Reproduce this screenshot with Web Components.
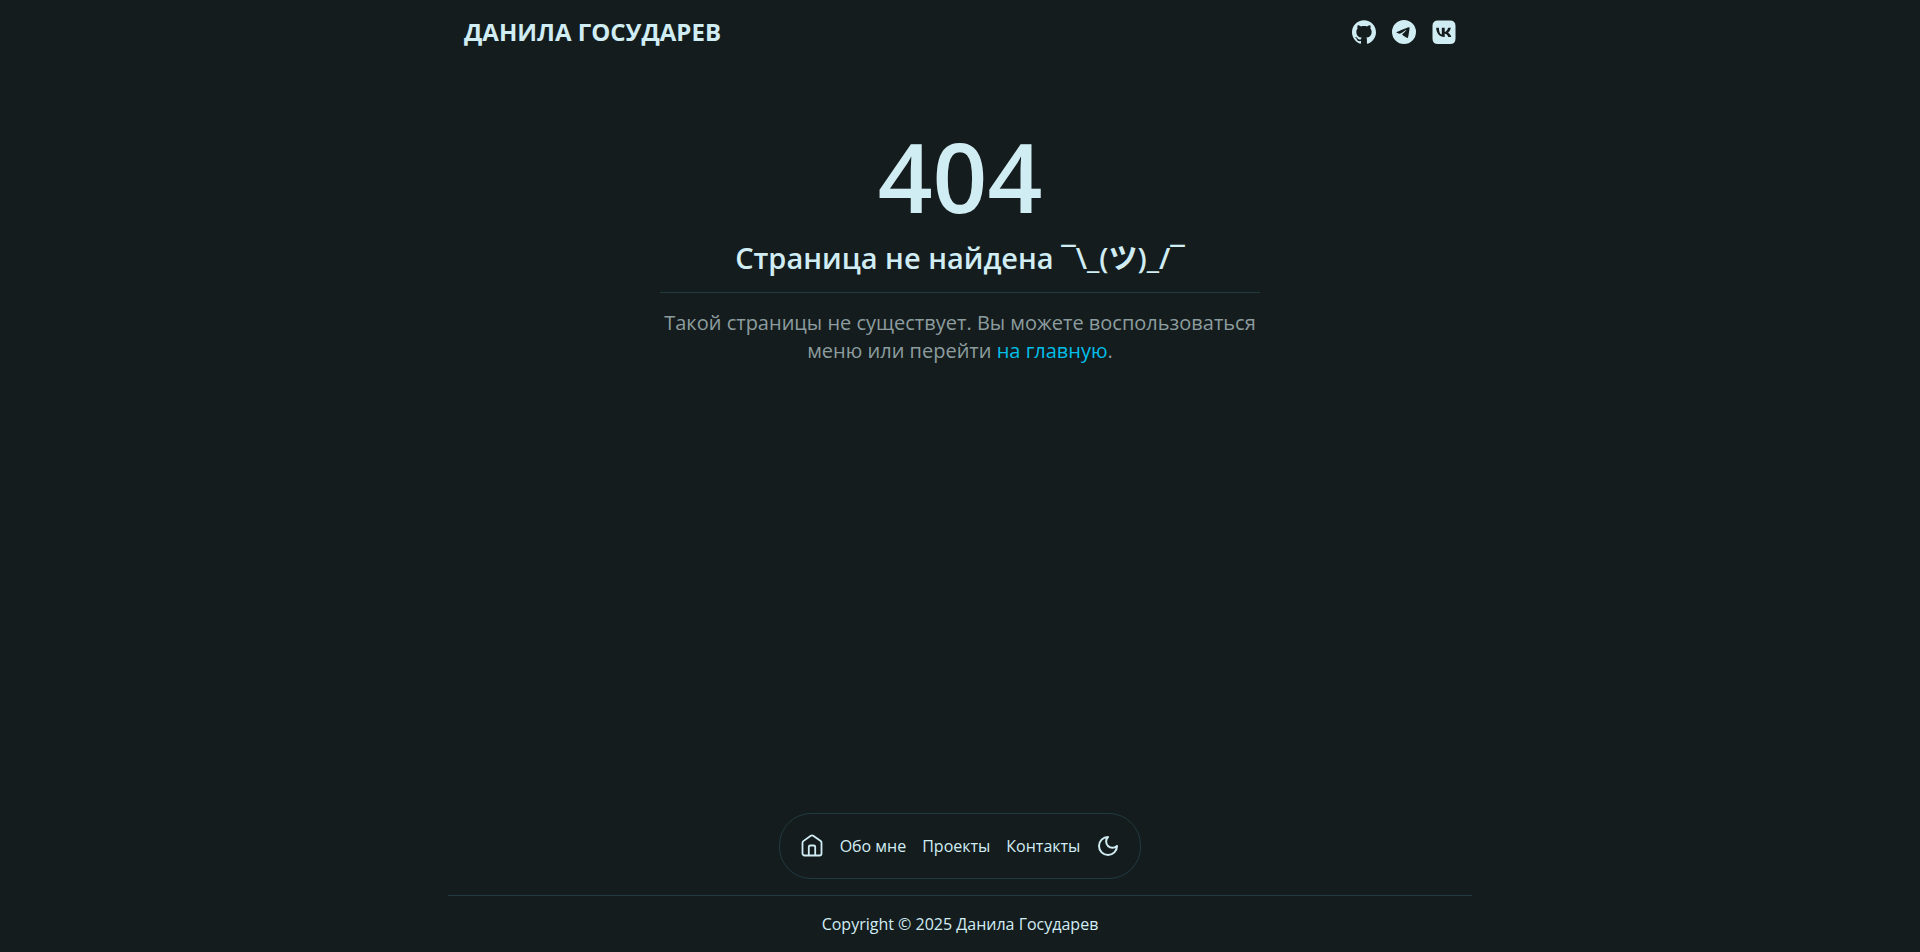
<!DOCTYPE html>
<html lang="ru">
<head>
<meta charset="utf-8">
<meta name="viewport" content="width=device-width, initial-scale=1">
<title>404 — Данила Государев</title>
<style>
:root { --bg: #151c1d; --fg: #d1edf4; --muted: #8c9c9f; --line: #1f3a41; --accent: #00bfe8; }
body { margin: 0; background: var(--bg); color: var(--fg); font: 16px/24px "Open Sans", "Noto Sans", "Noto Sans CJK JP", sans-serif; }
</style>
</head>
<body>
<app-shell>
  <site-header slot="header"></site-header>
  <not-found heading="404">Страница не найдена ¯\_(ツ)_/¯</not-found>
  <site-nav slot="nav"></site-nav>
  <site-footer slot="footer">Copyright © 2025 Данила Государев</site-footer>
</app-shell>
<script>
const define = (name, html) => customElements.define(name, class extends HTMLElement {
  constructor() {
    super();
    const t = document.createElement('template');
    t.innerHTML = html;
    this.attachShadow({ mode: 'open' }).append(t.content.cloneNode(true));
  }
});

define('app-shell', `
<style>
:host { display: flex; flex-direction: column; min-height: 100vh; max-width: 1024px; margin: 0 auto; }
main { flex: 1; padding: 64px 16px; }
</style>
<slot name="header"></slot><main><slot></slot></main><slot name="nav"></slot><slot name="footer"></slot>`);

define('site-header', `
<style>
:host { display: block; }
header { display: flex; align-items: center; justify-content: space-between; height: 64px; padding: 0 16px; }
a { color: inherit; text-decoration: none; }
.brand { font-size: 24px; line-height: 32px; font-weight: 700; }
nav { display: flex; gap: 16px; }
nav a { display: flex; }
svg { width: 24px; height: 24px; fill: currentColor; }
</style>
<header>
<a class="brand" href="#">ДАНИЛА ГОСУДАРЕВ</a>
<nav aria-label="Социальные сети">
<a href="#github" aria-label="GitHub"><svg viewBox="0 0 24 24"><path d="M12 .297c-6.63 0-12 5.373-12 12 0 5.303 3.438 9.8 8.205 11.385.6.113.82-.258.82-.577 0-.285-.01-1.04-.015-2.04-3.338.724-4.042-1.61-4.042-1.61C4.422 18.07 3.633 17.7 3.633 17.7c-1.087-.744.084-.729.084-.729 1.205.084 1.838 1.236 1.838 1.236 1.07 1.835 2.809 1.305 3.495.998.108-.776.417-1.305.76-1.605-2.665-.3-5.466-1.332-5.466-5.93 0-1.31.465-2.38 1.235-3.22-.135-.303-.54-1.523.105-3.176 0 0 1.005-.322 3.3 1.23.96-.267 1.98-.399 3-.405 1.02.006 2.04.138 3 .405 2.28-1.552 3.285-1.23 3.285-1.23.645 1.653.24 2.873.12 3.176.765.84 1.23 1.91 1.23 3.22 0 4.61-2.805 5.625-5.475 5.92.42.36.81 1.096.81 2.22 0 1.606-.015 2.896-.015 3.286 0 .315.21.69.825.57C20.565 22.092 24 17.592 24 12.297c0-6.627-5.373-12-12-12"/></svg></a>
<a href="#telegram" aria-label="Telegram"><svg viewBox="0 0 24 24"><path d="M11.944 0A12 12 0 0 0 0 12a12 12 0 0 0 12 12 12 12 0 0 0 12-12A12 12 0 0 0 12 0a12 12 0 0 0-.056 0zm4.962 7.224c.1-.002.321.023.465.14a.506.506 0 0 1 .171.325c.016.093.036.306.02.472-.18 1.898-.962 6.502-1.36 8.627-.168.9-.499 1.201-.82 1.23-.696.065-1.225-.46-1.9-.902-1.056-.693-1.653-1.124-2.678-1.8-1.185-.78-.417-1.21.258-1.91.177-.184 3.247-2.977 3.307-3.23.007-.032.014-.15-.056-.212s-.174-.041-.249-.024c-.106.024-1.793 1.14-5.061 3.345-.48.33-.913.49-1.302.48-.428-.008-1.252-.241-1.865-.44-.752-.245-1.349-.374-1.297-.789.027-.216.325-.437.893-.663 3.498-1.524 5.83-2.529 6.998-3.014 3.332-1.386 4.025-1.627 4.476-1.635z"/></svg></a>
<a href="#vk" aria-label="VK"><svg viewBox="0 0 24 24"><path fill-rule="evenodd" d="M6 .5h12q5.500 0 5.500 5.500v12.500q0 5.500-5.500 5.500H6q-5.500 0-5.500-5.500V6Q.5.5 6 .5zM4.200 7.800c.2 5.600 3.200 9.200 8.100 9.200h.4v-3.300c1.800.2 3 1.500 3.600 3.300h3c-.7-2.400-2.300-3.700-3.300-4.200 1-.6 2.400-2.400 2.800-5h-2.700c-.5 2.200-1.900 3.900-3.400 4.100V7.800H9.800v6.800C8.200 14.200 7 12.200 6.900 7.800z"/></svg></a>
</nav>
</header>`);

customElements.define('not-found', class extends HTMLElement {
  constructor() {
    super();
    this.attachShadow({ mode: 'open' }).innerHTML = `
<style>
:host { display: block; max-width: 600px; margin: 0 auto; text-align: center; }
h1 { margin: 0; font-size: 96px; line-height: 96px; font-weight: 600; }
h2 { margin: 16px 0 0; padding-bottom: 16px; border-bottom: 1px solid var(--line); font-size: 29px; line-height: 36px; font-weight: 600; }
p { margin: 16px 0 0; color: var(--muted); font-size: 20px; line-height: 28px; }
a { color: var(--accent); text-decoration: none; }
</style>
<h1></h1><h2><slot></slot></h2>
<p>Такой страницы не существует. Вы можете воспользоваться меню или перейти <a href="#">на главную</a>.</p>`;
    this.shadowRoot.querySelector('h1').textContent = this.getAttribute('heading');
  }
});

define('site-nav', `
<style>
:host { display: flex; justify-content: center; padding-bottom: 16px; }
nav { display: flex; align-items: center; gap: 16px; height: 64px; padding: 0 20px; border: 1px solid var(--line); border-radius: 32px; }
a, button { display: flex; color: inherit; text-decoration: none; }
button { padding: 0; border: 0; background: none; }
svg { width: 24px; height: 24px; fill: none; stroke: currentColor; stroke-width: 2; stroke-linecap: round; stroke-linejoin: round; }
</style>
<nav aria-label="Меню">
<a href="#" aria-label="Главная"><svg viewBox="0 0 24 24"><path stroke-width="1.800" d="M2.500 8.700q0-1 .8-1.600L10.800 1.700q1.200-.8 2.400 0L20.700 7.100q.8.6.8 1.600V19.500a2 2 0 0 1-2 2h-15a2 2 0 0 1-2-2zM8.800 21.300V13a1.500 1.500 0 0 1 1.500-1.500h3.400a1.500 1.500 0 0 1 1.500 1.500v8.300"/></svg></a>
<a href="#about">Обо мне</a><a href="#projects">Проекты</a><a href="#contacts">Контакты</a>
<button type="button" aria-label="Сменить тему"><svg viewBox="0 0 24 24"><path d="M12 3a6 6 0 0 0 9 9 9 9 0 1 1-9-9z"/></svg></button>
</nav>`);

define('site-footer', `
<style>
:host { display: block; }
footer { padding: 16px; border-top: 1px solid var(--line); text-align: center; }
</style>
<footer><slot></slot></footer>`);
</script>
</body>
</html>
